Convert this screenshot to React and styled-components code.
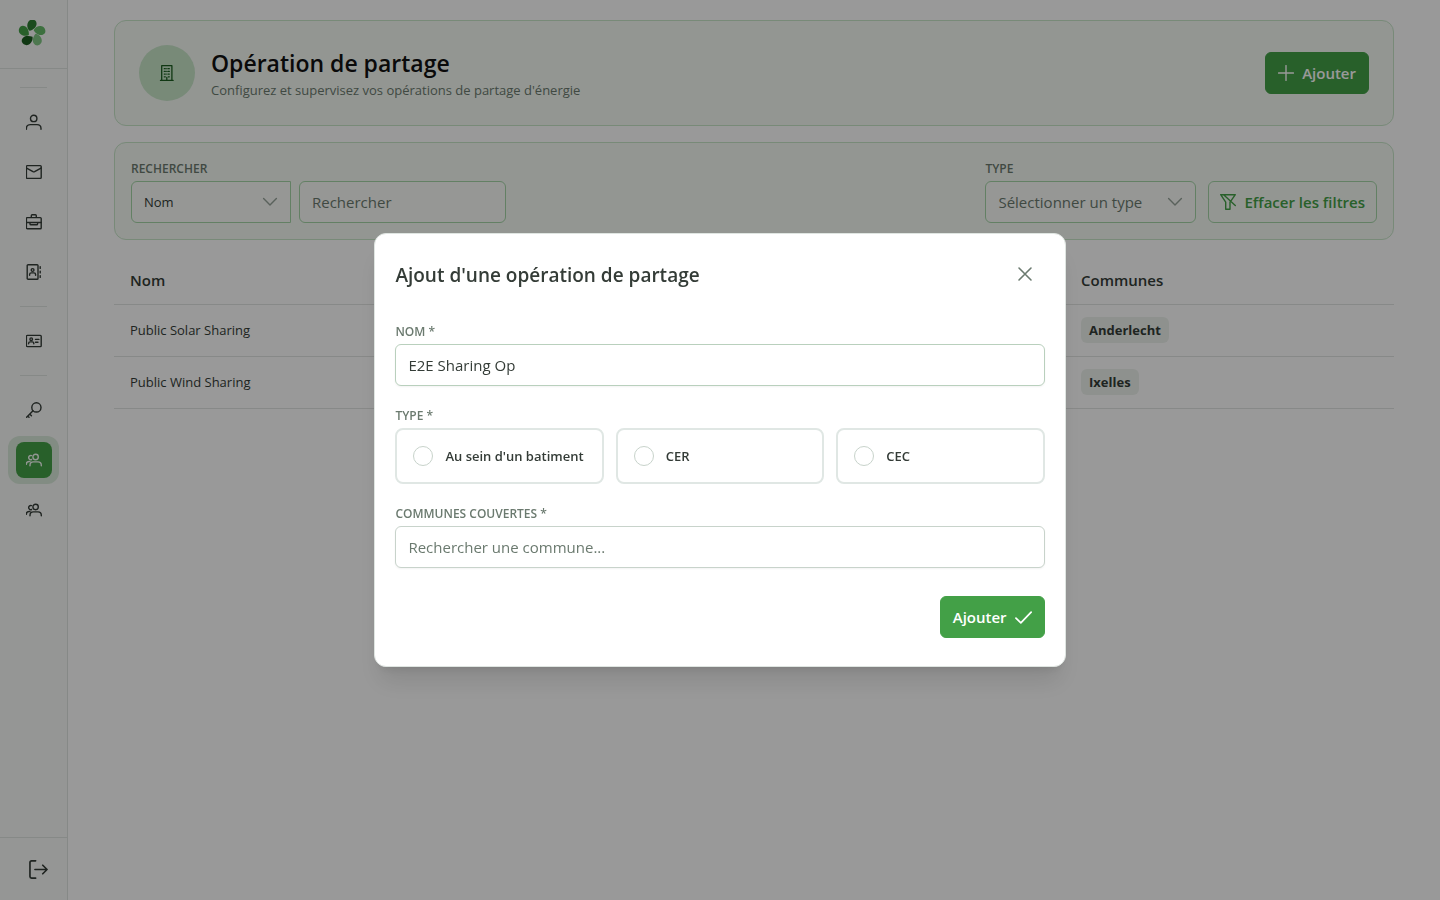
import React, { useState } from 'react'
import styled, { createGlobalStyle, css } from 'styled-components'

const GlobalStyle = createGlobalStyle`
  * { box-sizing: border-box; }
  body {
    margin: 0;
    background: #fff;
    color: #343c37;
    font-family: "Segoe UI", "Open Sans", "Noto Sans", sans-serif;
    font-size: 13px;
  }
  button, input, select { font-family: inherit; margin: 0; }
`

const icons = {
  user: (
    <>
      <circle cx="7.7" cy="4.4" r="3.2" />
      <path d="M.4 15.2v-.7c0-2.4 1.7-3.9 4-3.9h6.6c2.3 0 4 1.5 4 3.9v.7" />
    </>
  ),
  mail: (
    <>
      <rect x=".4" y="1.6" width="14.8" height="12.8" rx=".9" />
      <path d="M.6 4.1 7 7.7q.8.4 1.6 0L15 4.1" />
    </>
  ),
  briefcase: (
    <>
      <rect x=".4" y="3.6" width="14.8" height="11.2" rx=".9" />
      <path d="M5.3 3.4V1.7q0-.9.9-.9h3.2q.9 0 .9.9v1.7M.4 8.5h14.8M4 8.6v1.3q0 .9.9.9h5.8q.9 0 .9-.9V8.6" />
    </>
  ),
  book: (
    <>
      <rect x="1.2" y=".7" width="10.8" height="14.6" rx=".9" />
      <circle cx="6.6" cy="6" r="1.4" />
      <path d="M3.6 11.2v-.6q0-1.7 1.7-1.7h2.6q1.7 0 1.7 1.7v.6M14.2 2.6v1.8M14.2 7.1v1.8M14.2 11.6v1.8" />
    </>
  ),
  card: (
    <>
      <rect x=".4" y="2.4" width="14.8" height="11.2" rx=".9" />
      <circle cx="5.2" cy="6.2" r="1.3" />
      <path d="M2.6 10.7v-.3q0-1.5 1.5-1.5h2.2q1.5 0 1.5 1.5v.3M9.5 6.4h3.4M9.5 9.2H12" />
    </>
  ),
  key: (
    <>
      <circle cx="10.4" cy="5.4" r="4.6" />
      <path d="m7 8.8-6.4 6.4M3.7 12.1l1.7 1.7M1.7 14.1l1.3 1.2" />
    </>
  ),
  users: (
    <>
      <circle cx="9.6" cy="5" r="2.7" />
      <path d="M4 13.7v-.5c0-2.1 1.3-3.3 3.3-3.3H12c2 0 3.3 1.2 3.3 3.3v.5M5.5 3.6a2.1 2.1 0 1 0 .1 3.9M.4 12.3v-.4c0-1.6 1-2.4 2.6-2.4h1" />
    </>
  ),
  building: (
    <>
      <path d="M2.7 15.3V.7h10.2v14.6M1.5 15.4h12.6" />
      <path d="M5.3 3.7h1M9.3 3.7h1M5.3 6.4h1M9.3 6.4h1M5.3 9.1h1M9.3 9.1h1M5.3 11.8h1M9.3 11.8h1M7.8 3.7h.1M7.8 6.4h.1M7.8 9.1h.1M7.8 12.4v2.8" />
    </>
  ),
  plus: <path d="M8 .6v14.8M.6 8h14.8" />,
  chevron: <path d="m1.6 4.6 6.4 6.4 6.4-6.4" />,
  close: <path d="m2 2 12 12M14 2 2 14" />,
  check: <path d="m.9 8.6 4.6 4.5L15.2 3" />,
  clear: <path d="M.7.7h14.6l-4 5.7M.7.7l5 7.5v7.1H10V8M3.6.8l11.7 10.8" />,
  logout: <path d="M5.6.7H2.2Q.8.7.8 2.1v11.8q0 1.4 1.4 1.4h3.4M5 8h10.2M11.6 4.4 15.2 8l-3.6 3.6" />,
}

const Icon = ({ name, size = 16, weight = 1.4 }) => (
  <Glyph viewBox="0 0 16 16" width={size} height={size} strokeWidth={weight} aria-hidden="true">
    {icons[name]}
  </Glyph>
)

const petals = ['#2e7d32', '#66bb6a', '#81c784', '#1b5e20', '#43a047']

const Logo = () => (
  <svg viewBox="-14 -13.3 28 28" width="28" height="28" aria-hidden="true">
    {petals.map((color, i) => (
      <path
        key={color}
        fill={color}
        transform={`rotate(${i * 72})`}
        d="M-2.5-2.5C-5-5-5.4-8.8-3.8-11.4-2.4-13.8.8-14.3 3-13 5.2-11.4 5-7.8 3-5.6 1.5-4-.5-3-2.5-2.5Z"
      />
    ))}
  </svg>
)

const navItems = [
  { divider: true },
  { icon: 'user', label: 'Profil' },
  { icon: 'mail', label: 'Invitations' },
  { icon: 'briefcase', label: 'Documents' },
  { icon: 'book', label: 'Contacts' },
  { divider: true },
  { icon: 'card', label: 'Membres' },
  { divider: true },
  { icon: 'key', label: 'Clés' },
  { icon: 'users', label: 'Opérations', active: true },
  { icon: 'users', label: 'Utilisateurs' },
]

const operations = [
  { name: 'Public Solar Sharing', town: 'Anderlecht' },
  { name: 'Public Wind Sharing', town: 'Ixelles' },
]

const types = ["Au sein d'un batiment", 'CER', 'CEC']

const Sidebar = () => (
  <Side>
    <Brand href="#" aria-label="Accueil"><Logo /></Brand>
    <Nav>
      {navItems.map((item, i) =>
        item.divider ? (
          <Divider key={i} />
        ) : (
          <NavLink key={i} href="#" aria-label={item.label} $active={item.active}>
            <span><Icon name={item.icon} /></span>
          </NavLink>
        )
      )}
    </Nav>
    <SideFooter>
      <LogoutButton type="button" aria-label="Déconnexion">
        <Icon name="logout" size={19} />
      </LogoutButton>
    </SideFooter>
  </Side>
)

const Filters = () => (
  <FilterCard>
    <Field>
      <Label htmlFor="search">RECHERCHER</Label>
      <Row $gap={8}>
        <SelectBox $width={160} $joined>
          <select id="column" aria-label="Colonne"><option>Nom</option></select>
          <Icon name="chevron" />
        </SelectBox>
        <SearchInput id="search" placeholder="Rechercher" />
      </Row>
    </Field>
    <Row $gap={12}>
      <Field>
        <Label htmlFor="type">TYPE</Label>
        <SelectBox $width={211} $muted>
          <select id="type"><option>Sélectionner un type</option></select>
          <Icon name="chevron" />
        </SelectBox>
      </Field>
      <Button type="button" $outlined><Icon name="clear" />Effacer les filtres</Button>
    </Row>
  </FilterCard>
)

const AddDialog = () => {
  const [name, setName] = useState('E2E Sharing Op')
  return (
    <Overlay>
      <Dialog role="dialog" aria-modal="true" aria-labelledby="dialog-title">
        <DialogHeader>
          <h2 id="dialog-title">Ajout d'une opération de partage</h2>
          <CloseButton type="button" aria-label="Fermer"><Icon name="close" weight={1.6} /></CloseButton>
        </DialogHeader>
        <Form onSubmit={(e) => e.preventDefault()}>
          <Field>
            <Label htmlFor="name">NOM *</Label>
            <Input id="name" $filled value={name} onChange={(e) => setName(e.target.value)} />
          </Field>
          <Field as="fieldset">
            <Label as="legend">TYPE *</Label>
            <Choices>
              {types.map((type) => (
                <Choice key={type}>
                  <input type="radio" name="operation-type" value={type} />
                  {type}
                </Choice>
              ))}
            </Choices>
          </Field>
          <Field>
            <Label htmlFor="towns">COMMUNES COUVERTES *</Label>
            <Input id="towns" placeholder="Rechercher une commune..." />
          </Field>
          <Actions>
            <Button type="submit">Ajouter<Icon name="check" size={17} weight={1.6} /></Button>
          </Actions>
        </Form>
      </Dialog>
    </Overlay>
  )
}

const App = () => {
  return (
    <>
      <GlobalStyle />
      <Layout>
        <Sidebar />
        <Main>
          <Content>
            <HeaderCard>
              <Badge><Icon name="building" weight={1.3} /></Badge>
              <Heading>
                <h1>Opération de partage</h1>
                <p>Configurez et supervisez vos opérations de partage d'énergie</p>
              </Heading>
              <Button type="button"><Icon name="plus" />Ajouter</Button>
            </HeaderCard>
            <Filters />
            <Table>
              <thead>
                <tr>
                  <th>Nom</th>
                  <th>Communes</th>
                </tr>
              </thead>
              <tbody>
                {operations.map((op) => (
                  <tr key={op.name}>
                    <td>{op.name}</td>
                    <td><Tag>{op.town}</Tag></td>
                  </tr>
                ))}
              </tbody>
            </Table>
          </Content>
        </Main>
      </Layout>
      <AddDialog />
    </>
  )
}

const Glyph = styled.svg`
  flex: none;
  fill: none;
  stroke: currentColor;
  stroke-linecap: round;
  stroke-linejoin: round;
`

const Layout = styled.div`
  display: flex;
  min-height: 100vh;
`

const Side = styled.aside`
  display: flex;
  flex-direction: column;
  width: 68px;
  flex: none;
  background: #f9faf9;
  border-right: 1px solid #dfe5e1;
`

const Brand = styled.a`
  display: flex;
  align-items: center;
  justify-content: center;
  height: 69px;
  padding-right: 3px;
  border-bottom: 1px solid #dfe5e1;
`

const Nav = styled.nav`
  display: flex;
  flex-direction: column;
  flex: 1;
  gap: 2px;
  padding: 10px 8px;
`

const Divider = styled.hr`
  width: 27px;
  height: 1px;
  margin: 8px auto;
  border: 0;
  background: #dfe5e1;
`

const NavLink = styled.a`
  display: flex;
  align-items: center;
  justify-content: center;
  height: 48px;
  border-radius: 12px;
  color: #343c37;

  span {
    display: flex;
    align-items: center;
    justify-content: center;
    width: 36px;
    height: 36px;
    border-radius: 8px;
  }

  ${({ $active }) => $active && css`
    background: #d9e9da;
    color: #f4faf4;
    span { background: #43a047; }
  `}
`

const SideFooter = styled.div`
  display: flex;
  padding: 12px 8px 11px 18px;
  border-top: 1px solid #dfe5e1;
`

const LogoutButton = styled.button`
  display: flex;
  align-items: center;
  justify-content: center;
  width: 40px;
  height: 39px;
  padding: 0;
  border: 0;
  background: none;
  color: #343c37;
`

const Main = styled.main`
  flex: 1;
  padding: 20px 16px;
`

const Content = styled.div`
  display: flex;
  flex-direction: column;
  gap: 16px;
  max-width: 1280px;
  margin: 0 auto;
`

const Card = styled.section`
  display: flex;
  border: 1px solid #c8e6c9;
  border-radius: 12px;
  background: #f5faf4;
`

const HeaderCard = styled(Card)`
  align-items: center;
  gap: 16px;
  padding: 24px;
`

const FilterCard = styled(Card)`
  justify-content: space-between;
  padding: 16px;
`

const Badge = styled.div`
  display: flex;
  align-items: center;
  justify-content: center;
  width: 56px;
  height: 56px;
  border-radius: 50%;
  background: #c8e6c9;
  color: #1b5e20;
`

const Heading = styled.div`
  flex: 1;
  h1 {
    margin: 0;
    color: #111;
    font-size: 23px;
    font-weight: 600;
    line-height: 34px;
  }
  p {
    margin: 0;
    color: #6b7a6f;
    font-size: 13px;
    line-height: 20px;
  }
`

const Button = styled.button`
  display: flex;
  align-items: center;
  gap: 8px;
  height: 42px;
  padding: 0 12px;
  border: 1px solid #43a047;
  border-radius: 6px;
  background: #43a047;
  color: #fff;
  font-size: 15px;
  font-weight: 600;
  white-space: nowrap;

  ${({ $outlined }) => $outlined && css`
    padding: 0 11px;
    background: none;
    border-color: #a5d6a7;
    color: #43a047;
  `}
`

const Row = styled.div`
  display: flex;
  align-items: flex-end;
  gap: ${({ $gap }) => $gap}px;
`

const Field = styled.div`
  display: flex;
  flex-direction: column;
  gap: 2px;
  min-width: 0;
  margin: 0;
  padding: 0;
  border: 0;
`

const Label = styled.label`
  padding: 0;
  color: #6b7a6f;
  font-size: 12px;
  font-weight: 600;
  line-height: 20px;
`

const Input = styled.input`
  width: 100%;
  height: 42px;
  padding: 0 12px;
  border: 1px solid ${({ $filled }) => ($filled ? '#b9d0bd' : '#c8d3cb')};
  border-radius: 6px;
  background: #fff;
  color: #343c37;
  font-size: 15px;
  outline: none;
  box-shadow: 0 1px 2px rgba(18, 18, 23, 0.05);
  &::placeholder {
    color: #6b7a6f;
    opacity: 1;
  }
`

const SearchInput = styled(Input)`
  width: 207px;
  border-color: #a5d6a7;
  background: #fafcf9;
  box-shadow: none;
`

const SelectBox = styled.div`
  display: grid;
  align-items: center;
  width: ${({ $width }) => $width}px;
  color: #97a39a;

  select {
    grid-area: 1 / 1;
    width: 100%;
    height: 42px;
    padding: 0 36px 0 12px;
    appearance: none;
    border: 1px solid #a5d6a7;
    border-radius: ${({ $joined }) => ($joined ? '6px 0 0 6px' : '6px')};
    background: #fafcf9;
    color: ${({ $muted }) => ($muted ? '#6b7a6f' : '#343c37')};
    font-size: ${({ $muted }) => ($muted ? 15 : 13)}px;
  }
  svg {
    grid-area: 1 / 1;
    justify-self: end;
    margin-right: 13px;
    pointer-events: none;
  }
`

const Table = styled.table`
  width: 100%;
  table-layout: fixed;
  border-collapse: collapse;
  text-align: left;

  th, td {
    padding: 0 16px;
    border-bottom: 1px solid #e2e5e3;
  }
  th {
    height: 48px;
    font-size: 15px;
    font-weight: 600;
  }
  th:first-child { width: 74.3%; }
  td {
    height: 52px;
    font-size: 13px;
  }
`

const Tag = styled.span`
  display: inline-block;
  padding: 0 8px;
  border-radius: 6px;
  background: #edf2ed;
  font-weight: 700;
  line-height: 26px;
`

const Overlay = styled.div`
  position: fixed;
  inset: 0;
  display: flex;
  align-items: center;
  justify-content: center;
  background: rgba(0, 0, 0, 0.4);
`

const Dialog = styled.div`
  width: 48vw;
  border: 1px solid #dfe5e1;
  border-radius: 12px;
  background: #fff;
  box-shadow: 0 20px 25px -5px rgba(0, 0, 0, 0.1), 0 8px 10px -6px rgba(0, 0, 0, 0.1);
`

const DialogHeader = styled.div`
  display: flex;
  align-items: center;
  justify-content: space-between;
  padding: 20px;
  h2 {
    margin: 0;
    padding-top: 2px;
    font-size: 19px;
    font-weight: 600;
  }
`

const CloseButton = styled.button`
  display: flex;
  align-items: center;
  justify-content: center;
  width: 40px;
  height: 40px;
  padding: 0;
  border: 0;
  background: none;
  color: #6b7a6f;
`

const Form = styled.form`
  display: flex;
  flex-direction: column;
  gap: 20px;
  padding: 8px 20px 28px;
`

const Choices = styled.div`
  display: grid;
  grid-template-columns: repeat(3, 1fr);
  gap: 12px;
  margin-top: 2px;
`

const Choice = styled.label`
  display: flex;
  align-items: center;
  gap: 12px;
  height: 56px;
  padding: 0 16px;
  border: 2px solid #e0e7e4;
  border-radius: 8px;
  font-size: 13px;
  font-weight: 600;
  white-space: nowrap;

  input {
    flex: none;
    width: 20px;
    height: 20px;
    margin: 0;
    appearance: none;
    border: 1px solid #c8d3cb;
    border-radius: 50%;
    background: #fff;
  }
`

const Actions = styled.div`
  display: flex;
  justify-content: flex-end;
  padding-top: 8px;
`

export default App
